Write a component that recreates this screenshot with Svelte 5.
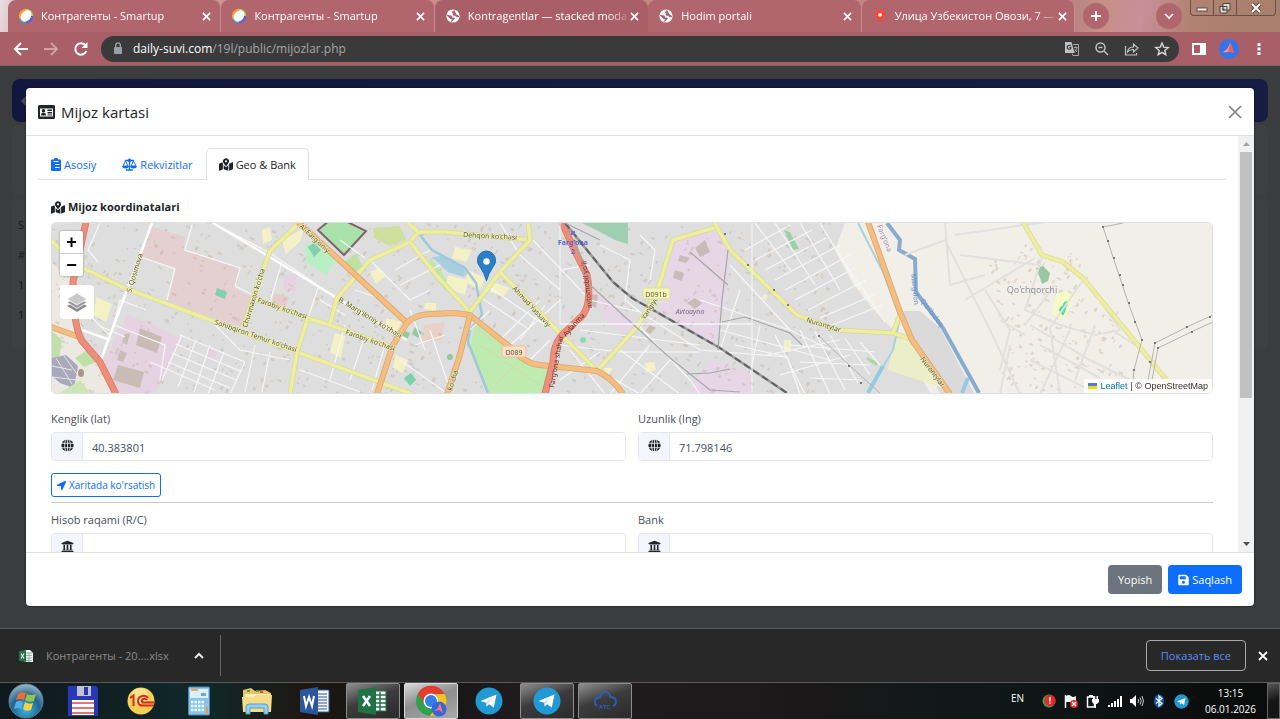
<script lang="ts">
  type Tab = { title: string; icon: "smartup" | "globe" | "pin"; active?: boolean };

  const browserTabs: Tab[] = [
    { title: "Контрагенты - Smartup", icon: "smartup" },
    { title: "Контрагенты - Smartup", icon: "smartup" },
    { title: "Kontragentlar — stacked moda", icon: "globe", active: true },
    { title: "Hodim portali", icon: "globe" },
    { title: "Улица Узбекистон Овози, 7 —", icon: "pin" },
  ];

  const cardTabs = [
    { id: "asosiy", label: "Asosiy" },
    { id: "rekvizit", label: "Rekvizitlar" },
    { id: "geo", label: "Geo & Bank" },
  ];

  const apps = [
    { id: "start", label: "Start", state: "" },
    { id: "commander", label: "Total Commander", state: "" },
    { id: "onec", label: "1C", state: "" },
    { id: "calc", label: "Calculator", state: "" },
    { id: "explorer", label: "Explorer", state: "" },
    { id: "word", label: "Word", state: "" },
    { id: "excel", label: "Excel", state: "open" },
    { id: "chrome", label: "Chrome", state: "focus" },
    { id: "telegram", label: "Telegram", state: "" },
    { id: "telegram", label: "Telegram", state: "open" },
    { id: "atc", label: "ATC", state: "open" },
  ];

  let activeTab = $state("geo");
  let lat = $state("40.383801");
  let lng = $state("71.798146");
  let account = $state("");
  let bank = $state("");

  // small deterministic generator for the building footprints
  function scatter(seed: number, count: number, x: number, y: number, w: number, h: number) {
    let s = seed;
    const next = () => (s = (s * 16807) % 2147483647) / 2147483647;
    return Array.from({ length: count }, () => ({
      x: x + next() * w,
      y: y + next() * h,
      w: 1 + next() * 4,
      h: 1 + next() * 2,
      r: next() > 0.5 ? 25 : -55,
    }));
  }

  const buildings = [
    ...scatter(1100011, 420, 51, 223, 380, 170),
    ...scatter(2900029, 380, 430, 223, 400, 170),
    ...scatter(7300073, 110, 1000, 310, 120, 80),
    ...scatter(9100091, 60, 990, 245, 100, 70),
  ];

  const yellowRoads = [
    "M51 240L65 255L83 268L127 289L213 321L297 352L412 394",
    "M298 224L270 251L253 298L243 327",
    "M253 298L307 318L330 325L392 347",
    "M308 318L297 352L290 394",
    "M330 324L337 298L370 260L410 242L418 232L445 232L530 240",
    "M407 222L418 232M410 242L438 277L470 312",
    "M528 222L530 240L500 272L470 312",
    "M500 272L597 371L637 327L657 292L673 240L717 227",
    "M714 222L730 250L797 315L837 330L893 333L911 339L893 333L901 312",
    "M1023 222L1042 255L1063 262L1083 278L1178 394",
  ];

  const orangeRoads = [
    "M298 222L348 268L407 323",
    "M377 394L393 345L407 323Q414 315 430 314L455 313L470 315L510 347Q525 364 540 365L597 371Q612 378 623 394",
    "M470 315L459 358L447 394",
    "M51 327L82 338",
    "M868 222L900 312L912 340L950 394",
  ];

  const redRoads = [
    "M86 222L73 282Q73 325 82 341L100 362L116 394",
    "M562 222L572 245L587 275Q592 302 583 315L562 335Q553 345 553 362L545 394",
  ];

  const streets = [
    "M152 223L127 290L100 362M60 285L110 336L127 290M100 326L125 337",
    "M213 223L270 253L337 298L407 340M282 262L270 302M318 288L308 318M320 300L345 315",
    "M100 223L88 250L98 262M192 225L185 250L240 268L235 286L255 296",
    "M141 257L175 269L167 300M146 310L120 300L114 325L165 345L160 380M150 362L215 390",
    "M180 335L245 362M176 344L240 371M172 353L236 380M168 362L230 388M182 335L162 380M196 340L178 387M210 345L194 392M224 352L208 394M245 362L230 394",
    "M215 325L240 350L290 360M255 345L245 392M270 352L262 392M345 325L330 380M365 336L350 380M385 345L372 390M300 370L360 392",
    "M340 240L365 258M355 290L385 300M370 260L410 300L430 290M400 285L440 265M395 270L430 250M430 330L450 390M415 345L445 335",
    "M400 360L445 392M410 310L425 350",
    "M500 223L520 255L560 290M533 240L590 300L640 312L700 350L787 357M560 270L590 265M600 245L630 260L625 300L640 312M640 235L655 250L650 280",
    "M480 297L530 330M490 288L545 325M470 330L490 310M520 340L545 305M505 350L560 300M530 360L550 340M540 300L500 340",
    "M580 330L700 345M560 345L620 352L700 352M640 327L690 380L700 394M570 350L605 394M650 345L610 394M670 360L640 394M600 371L640 394M620 350L680 394M560 380L600 352",
    "M700 300L790 330L830 350M735 345L787 357L800 394M720 330L830 360M740 290L720 350M760 325L750 375M730 265L790 330",
    "M745 250L790 225M755 260L812 230M765 270L826 238M775 280L840 245M785 290L850 255M795 300L855 268M808 310L866 280M820 318L874 295M830 326L882 305",
    "M755 223L792 272M775 223L815 285M800 223L840 290M820 223L860 290M830 240L885 322",
    "M800 330L830 394M815 332L845 390M830 335L858 383M845 338L870 375M860 342L880 365M790 345L875 352M800 362L870 365M810 378L862 380",
    "M775 335L805 394M767 355L840 340M780 375L850 355",
  ];

  const villageStreets = [
    "M905 255L945 240L990 330L1020 394M945 223L950 285L985 275M960 255L1040 265M955 235L1045 222",
    "M965 300L1035 258M1042 258L1025 310L1060 325L1095 335L1120 330M1055 285L1025 325M1083 280L1050 328",
    "M1050 328L1060 394M1030 325L1090 360L1130 380M1040 345L1100 378M1030 360L1090 390M1070 330L1040 394M1095 325L1075 380M1112 330L1135 345",
    "M1010 345L1000 394M1000 320L1025 335M985 290L1010 330L1000 370M1100 300L1120 330",
  ];
</script>

{#snippet closeMark(size: number)}
  <svg width={size} height={size} viewBox="0 0 10 10" aria-hidden="true"><path d="M1 1L9 9M9 1L1 9" fill="none" stroke="currentColor" stroke-width="1.8" /></svg>
{/snippet}

{#snippet mapIcon()}
  <svg width="14" height="13" viewBox="0 0 576 512" aria-hidden="true"><path fill="currentColor" d="M288 0c-69.59 0-126 56.41-126 126 0 56.26 82.35 158.8 113.9 196.02 6.39 7.54 17.82 7.54 24.2 0C331.65 284.8 414 182.26 414 126 414 56.41 357.59 0 288 0zm0 168c-23.2 0-42-18.8-42-42s18.8-42 42-42 42 18.8 42 42-18.8 42-42 42zM20.12 215.95A32.006 32.006 0 0 0 0 245.66v250.32c0 11.32 11.43 19.06 21.94 14.86L160 448V214.92c-8.84-15.98-16.07-31.54-21.25-46.42L20.12 215.95zM288 359.67c-14.07 0-27.38-6.18-36.51-16.96-19.66-23.2-40.57-49.62-59.49-76.72v182l192 64V266c-18.92 27.09-39.82 53.52-59.49 76.72-9.13 10.77-22.44 16.95-36.51 16.95zm266.06-198.51L416 224v288l139.88-55.95A31.996 31.996 0 0 0 576 426.34V176.02c0-11.32-11.43-19.06-21.94-14.86z" /></svg>
{/snippet}

{#snippet globeIcon()}
  <svg width="13" height="13" viewBox="0 0 16 16" aria-hidden="true">
    <circle cx="8" cy="8" r="7.5" fill="#212529" />
    <path d="M0 5.3H16M0 10.7H16M8 0V16" stroke="#f3f6ff" stroke-width="1" />
    <ellipse cx="8" cy="8" rx="3.6" ry="8" fill="none" stroke="#f3f6ff" stroke-width="1" />
  </svg>
{/snippet}

{#snippet bankIcon()}
  <svg width="13" height="13" viewBox="0 0 512 512" aria-hidden="true"><path fill="#212529" d="M496 128v16a8 8 0 0 1-8 8h-24v12c0 6.627-5.373 12-12 12H60c-6.627 0-12-5.373-12-12v-12H24a8 8 0 0 1-8-8v-16a8 8 0 0 1 4.941-7.392l232-88a7.996 7.996 0 0 1 6.118 0l232 88A8 8 0 0 1 496 128zm-24 304H40c-13.255 0-24 10.745-24 24v16a8 8 0 0 0 8 8h464a8 8 0 0 0 8-8v-16c0-13.255-10.745-24-24-24zM96 192v192H60c-6.627 0-12 5.373-12 12v20h416v-20c0-6.627-5.373-12-12-12h-36V192h-64v192h-64V192h-64v192h-64V192H96z" /></svg>
{/snippet}

{#snippet telegramIcon(size: number)}
  <svg width={size} height={size} viewBox="0 0 28 28" aria-hidden="true">
    <circle cx="14" cy="14" r="13.5" fill="#2199d4" />
    <path d="M5.5 14L21.5 7.6L18.8 20.6L14 17.2L11.6 19.6L11 15.7Z" fill="#fff" />
    <path d="M11 15.7L18.5 10L12.7 16.3L11.6 19.6Z" fill="#b9d6e8" />
  </svg>
{/snippet}

<div class="screen">
  <header class="tabstrip">
    <div class="tabs">
      {#each browserTabs as tab}
        <div class="tab" class:active={tab.active}>
          <svg width="16" height="16" viewBox="0 0 16 16" aria-hidden="true">
            {#if tab.icon === "smartup"}
              <path d="M8 8L1.500 11A7.300 7.300 0 0 1 8 .7Z" fill="#ff9b2e" />
              <path d="M8 8V.7A7.300 7.300 0 0 1 15.300 8Z" fill="#a5cf62" />
              <path d="M8 8H15.300A7.300 7.300 0 0 1 8 15.300Z" fill="#5a63c9" />
              <path d="M8 8V15.300A7.300 7.300 0 0 1 1.500 11Z" fill="#35a8df" />
              <ellipse cx="8" cy="8" rx="6.2" ry="4.8" transform="rotate(-48 8 8)" fill="#fff" />
            {:else if tab.icon === "globe"}
              <circle cx="8" cy="8" r="6.6" fill="#fff" />
              <path d="M2 7.300L6.500 8L7 10L9.500 10L8.500 11.800L6 13.500L8 11.500L5.500 10.500ZM9 2.500L7 4.500L8.500 5.500L8 7L10.500 7.500L11.500 9L14 8.500L11 6.500L10 4.500Z" fill="#a75d66" stroke="#a75d66" stroke-width=".8" />
            {:else}
              <path d="M8 14.5L6.6 11.5A5 5 0 1 1 9.4 11.5Z" fill="#ff4433" />
              <circle cx="8" cy="6.8" r="1.9" fill="#fff" />
            {/if}
          </svg>
          <span class="tab-title">{tab.title}</span>
          <button type="button" aria-label="Close tab">{@render closeMark(9)}</button>
        </div>
      {/each}
    </div>
    <button type="button" class="round" aria-label="New tab">
      <svg width="12" height="12" viewBox="0 0 12 12"><path d="M6 1V11M1 6H11" stroke="#fff" stroke-width="1.8" /></svg>
    </button>
    <button type="button" class="round tab-search" aria-label="Search tabs">
      <svg width="10" height="8" viewBox="0 0 10 8"><path d="M1 2L5 6L9 2" fill="none" stroke="#fff" stroke-width="1.7" /></svg>
    </button>
    <div class="window-buttons">
      <button type="button" aria-label="Minimize"><svg width="14" height="12" viewBox="0 0 14 12"><rect x="2" y="6" width="10" height="3" fill="#fff" stroke="#5c4a48" /></svg></button>
      <button type="button" aria-label="Restore"><svg width="14" height="12" viewBox="0 0 14 12"><path d="M5 1.5H12V8H5ZM2 4.500H9V11H2Z" fill="#ddd" stroke="#4d3f3d" /><rect x="4.500" y="6.500" width="2" height="2" fill="#4d3f3d" /></svg></button>
      <button type="button" class="wide" aria-label="Close"><svg width="14" height="12" viewBox="0 0 14 12"><path d="M3 2L11 10M11 2L3 10" stroke="#5c4a48" stroke-width="4" /><path d="M3 2L11 10M11 2L3 10" stroke="#fff" stroke-width="2" /></svg></button>
    </div>
  </header>

  <nav class="toolbar" aria-label="Browser">
    <button type="button" aria-label="Back"><svg width="16" height="16" viewBox="0 0 16 16"><path d="M15 8H2.500M8 2L2 8L8 14" fill="none" stroke="#fff" stroke-width="2" /></svg></button>
    <button type="button" aria-label="Forward"><svg width="16" height="16" viewBox="0 0 16 16"><path d="M1 8H13.500M8 2L14 8L8 14" fill="none" stroke="#d3a1a6" stroke-width="1.8" /></svg></button>
    <button type="button" aria-label="Reload"><svg width="16" height="16" viewBox="0 0 16 16"><path d="M13.300 10A5.700 5.700 0 1 1 12.300 4.200" fill="none" stroke="#fff" stroke-width="2" /><path d="M14.500 1V7H8.500Z" fill="#fff" /></svg></button>
    <div class="address">
      <svg width="10" height="13" viewBox="0 0 10 13" aria-hidden="true"><rect x="1" y="5" width="8" height="7" rx="1" fill="#9aa0a6" /><path d="M2.700 5V3.200A2.300 2.300 0 0 1 7.300 3.200V5" fill="none" stroke="#9aa0a6" stroke-width="1.400" /></svg>
      <span class="url"><b>daily-suvi.com</b>/19l/public/mijozlar.php</span>
      <button type="button" aria-label="Translate"><svg width="16" height="16" viewBox="0 0 16 16"><path d="M1 1H7.500L10.500 12H1Z" fill="#bfc1c4" /><path d="M6.800 5A2 2 0 1 0 6.800 7.500V6.500H5.300" fill="none" stroke="#3a3a3a" stroke-width="1.200" /><path d="M9 3.500H14.500V14.500H9L8 12.500M10 6.500H13.500M11.700 5.500V6.500M13 7Q12 10 10 11M11 8.500L13 11" fill="none" stroke="#a5a7aa" /></svg></button>
      <button type="button" aria-label="Zoom"><svg width="16" height="16" viewBox="0 0 16 16"><circle cx="6.500" cy="6.500" r="4.500" fill="none" stroke="#bfc1c4" stroke-width="1.500" /><path d="M10 10L14 14M4.500 6.500H8.500" stroke="#bfc1c4" stroke-width="1.500" /></svg></button>
      <button type="button" aria-label="Share"><svg width="16" height="16" viewBox="0 0 16 16"><path d="M1.500 5V14H12.500V12M3.500 11Q4 6 9.500 6V3L14 7L9.500 11V8.500Q5.500 8.300 3.500 11Z" fill="none" stroke="#bfc1c4" stroke-width="1.200" /></svg></button>
      <button type="button" aria-label="Bookmark"><svg width="16" height="16" viewBox="0 0 16 16"><path d="M8 2L9.700 6.100L14.200 6.500L10.800 9.400L11.800 13.700L8 11.400L4.200 13.700L5.200 9.400L1.800 6.500L6.300 6.100Z" fill="none" stroke="#d5d6d8" stroke-width="1.400" /></svg></button>
    </div>
    <button type="button" aria-label="Side panel"><svg width="14" height="14" viewBox="0 0 14 14"><path fill-rule="evenodd" fill="#fff" d="M0 1H14V13H0ZM2 3V11H8V3Z" /></svg></button>
    <button type="button" aria-label="Profile"><svg width="20" height="20" viewBox="0 0 20 20"><circle cx="10" cy="10" r="10" fill="#3274ee" /><path d="M11.500 3L10 13L3.500 13.500L8.500 9.500Z" fill="#ff8a7d" /><path d="M11.500 3L15.500 14.500L9.500 12.500Z" fill="#e9615f" /></svg></button>
    <button type="button" aria-label="Menu"><svg width="4" height="14" viewBox="0 0 4 14"><path d="M.5 1H3.500V4H.5ZM.5 5.500H3.500V8.500H.5ZM.5 10H3.500V13H.5Z" fill="#fff" /></svg></button>
  </nav>

  <main class="page">
    <div class="behind" aria-hidden="true">
      <div class="navbar"><svg width="8" height="12" viewBox="0 0 8 12"><path d="M7 1L2 6L7 11" fill="none" stroke="#4c4c52" stroke-width="3" /></svg></div>
      <div class="ghost"></div>
      <div class="ghost list"><span>S</span><span>#</span><span>1</span><span>1</span></div>
    </div>

    <section class="modal" role="dialog" aria-labelledby="modal-title">
      <header class="modal-header">
        <svg width="17" height="14" viewBox="0 0 34 28" aria-hidden="true">
          <path fill="#212529" fill-rule="evenodd" d="M3 0H31Q34 0 34 3V25Q34 28 31 28H3Q0 28 0 25V3Q0 0 3 0ZM4 7V23H30V7ZM6 20Q6 16 9 16H13Q16 16 16 20V21H6ZM11 8A3.500 3.500 0 1 1 10.900 8ZM19 9H28V12H19ZM19 14H28V17H19ZM19 19H28V21H19Z" />
        </svg>
        <h1 id="modal-title">Mijoz kartasi</h1>
        <button type="button" aria-label="Yopish"><svg width="14" height="14" viewBox="0 0 14 14"><path d="M1 1L13 13M13 1L1 13" stroke="#808080" stroke-width="1.700" /></svg></button>
      </header>

      <div class="modal-scroll">
        <div class="modal-body">
          <div class="card-tabs" role="tablist">
            {#each cardTabs as tab}
              <button type="button" role="tab" class:active={activeTab === tab.id} aria-selected={activeTab === tab.id} onclick={() => (activeTab = tab.id)}>
                {#if tab.id === "asosiy"}
                  <svg width="10" height="13" viewBox="0 0 20 26" aria-hidden="true"><path fill="currentColor" fill-rule="evenodd" d="M2 3H6A4 4 0 0 1 14 3H18Q20 3 20 5V24Q20 26 18 26H2Q0 26 0 24V5Q0 3 2 3ZM5 6V8H15V6ZM8 12V14H17V12ZM8 18V20H17V18Z" /></svg>
                {:else if tab.id === "rekvizit"}
                  <svg width="15" height="13" viewBox="0 0 30 26" aria-hidden="true"><path d="M6 5H24M15 1V24M8 24H22" fill="none" stroke="currentColor" stroke-width="2.600" /><path d="M7 6L2 16H12ZM23 6L18 16H28Z" fill="none" stroke="currentColor" stroke-width="2" /><path d="M0 16H14Q13 21 7 21Q1 21 0 16ZM16 16H30Q29 21 23 21Q17 21 16 16Z" fill="currentColor" /><circle cx="15" cy="5" r="3.500" fill="currentColor" /></svg>
                {:else}
                  {@render mapIcon()}
                {/if}
                {tab.label}
              </button>
            {/each}
          </div>

          <div class="tab-content">
            <h2>{@render mapIcon()} Mijoz koordinatalari</h2>

            <div class="map">
              <svg class="tiles" viewBox="51 223 1162 170" preserveAspectRatio="xMidYMid slice" role="img" aria-label="Farg'ona">
                <rect x="51" y="223" width="1162" height="170" fill="#f2efe9" />
                <path d="M51 223H845L835 250L852 282L872 308L898 335L930 393H51Z" fill="#dedede" />
                <path d="M903 311L920 311L940 328L974 393H940L912 340Z" fill="#dadada" />
                <path d="M51 262L75 285L82 338L104 370L115 393H51Z" fill="#ece8e2" />
                <path d="M152 227L185 237L183 250L240 267L235 288L253 298L243 327L225 322L167 302L175 268L140 257Z" fill="#e4d0d0" />
                <path d="M128 315L165 330L180 338L155 393H115L103 362Z" fill="#e6d3e2" />
                <path d="M283 276L297 272L296 292L284 290ZM208 348L218 352L214 360L206 357Z" fill="#e6d3e2" />
                <path d="M274 293L289 297L286 308L272 303Z" fill="#e6cdcd" />
                <path d="M673 243L715 230L730 250L724 300L717 343L700 336L660 315Z" fill="#e6d6e6" />
                <path d="M592 290L602 295L640 327L625 334L605 320Z" fill="#e6d6e6" />
                <path d="M710 360L752 373V393H690L700 372Z" fill="#e6d6e6" />
                <path d="M424 325L445 322L442 340L422 342Z" fill="#e8d2c8" />
                <path d="M895 338L911 340L920 358L943 388L888 370Z" fill="#ebefc9" />
                <g fill="#bfa997" opacity=".38">
                  {#each buildings as b}
                    <rect x={b.x} y={b.y} width={b.w} height={b.h} transform="rotate({b.r} {b.x} {b.y})" />
                  {/each}
                </g>
                <!-- parks and pitches -->
                <path d="M475 324L485 325L510 347L530 362L552 368L543 393H490L480 375L470 348Z" fill="#bdebb0" />
                <path d="M476 328L505 348M480 345L540 385M490 390L520 360" stroke="#d9d7b0" stroke-width="1" />
                <path d="M318 230L335 216L366 231L344 255Z" fill="#a9e3ab" stroke="#82656c" stroke-width="2" />
                <path d="M305 246L315 240L338 258L326 275L306 262Z" fill="#b9efc5" />
                <path d="M308 247L314 243L321 250L314 257ZM217 288L227 292L225 299L215 295Z" fill="#84cfae" />
                <path d="M373 228L400 226L406 240L390 246L374 238Z" fill="#cfdf9e" />
                <path d="M345 262L356 253L362 266L352 274Z" fill="#bee0a2" />
                <path d="M582 223H628V244L615 240L600 232Z" fill="#9fcfb0" />
                <path d="M784 230L790 232L799 249L793 250Z" fill="#9bcfa9" />
                <path d="M430 257L440 270L450 285L445 290L430 272Z" fill="#bfe5b0" />
                <path d="M404 378L411 373L416 380L410 386Z" fill="#75d4ab" />
                <path d="M402 330L410 333L407 340L400 336ZM415 327L422 332L418 338L412 334Z" fill="#92c9a0" />
                <path d="M51 330L62 340L58 365L51 370ZM75 358L90 348L96 362L84 367Z" fill="#bfe0a8" />
                <path d="M52 358L66 355L78 366L74 388L60 383L52 376Z" fill="#a9a8bd" />
                <path d="M56 358L72 384M64 356L77 374M52 366L72 370M53 377L76 380" stroke="#e8e4e4" stroke-width="1" />
                <path d="M60 393L80 380L90 393Z" fill="#cde4b6" />
                <ellipse cx="81" cy="373" rx="3" ry="4" fill="#a5958d" />
                <path d="M1036 268L1043 266L1050 273L1048 281L1042 284L1040 278Z" fill="#98c7a1" />
                <path d="M1056 294L1067 291L1074 296L1064 319L1052 314Z" fill="#f6fbc5" />
                <path d="M1059 310L1062 306L1066 308L1063 315ZM1064 303L1067 301L1067 306L1063 307Z" fill="#47dfa5" stroke="#47dfa5" />
                <path d="M868 357L878 363L876 366L866 359Z" fill="#aed7a4" />
                <circle cx="583" cy="340" r="3" fill="#8ed8b8" />
                <circle cx="450" cy="357" r="3" fill="#92c9a0" />
                <!-- school plots -->
                <path d="M262 230L270 227L272 240L263 244ZM282 240L304 228L300 242L286 254ZM96 297L112 304L106 322L94 315ZM335 333L345 336L341 358L330 352ZM370 272L380 268L386 276L376 284ZM386 318L402 322L396 332L386 330ZM395 355L408 360L403 373L393 368ZM425 303L436 303L436 311L424 309ZM455 247L472 250L466 262L452 258ZM448 275L468 280L465 295L445 287ZM468 270L485 278L480 290L466 282ZM493 282L510 288L504 296L490 292ZM604 368L613 368L608 376ZM645 363L654 362L656 370L646 372ZM784 340L791 340V352L784 352ZM764 294L768 296L765 300L762 298Z" fill="#f5f1c6" />
                <!-- factories -->
                <path d="M140 328L162 337L157 353L136 345ZM118 365L144 372L140 388L113 380ZM125 334L130 333L127 345L122 342ZM120 350L127 353L123 362L117 360ZM695 248L705 240L710 252L700 257ZM675 270L684 273L682 281L673 278ZM680 255L690 258L686 263L678 261ZM695 298L702 303L695 309L687 303ZM590 294L598 295L596 308L589 304ZM650 325L656 328L650 334L645 331Z" fill="#c9bcb6" />
                <!-- water -->
                <path d="M432 257L443 256L465 267L464 277L448 272Z" fill="#a5cfdc" />
                <path d="M420 235L432 250L465 268L476 283L482 315L470 330L468 342L488 393" fill="none" stroke="#9fc8dd" stroke-width="2.500" />
                <path d="M858 223L883 272L900 318L893 350L883 367" fill="none" stroke="#a9d2dc" stroke-width="2" />
                <path d="M883 366L868 393M968 378L962 393" stroke="#93cbe2" stroke-width="4" />
                <path d="M887 223L900 240L899 250L915 259L916 292L943 328L979 393" fill="none" stroke="#88acd0" stroke-width="4" />
                <!-- streets -->
                {#each streets as d}
                  <path {d} fill="none" stroke="#f7f7f7" stroke-width="1.200" />
                {/each}
                {#each villageStreets as d}
                  <path {d} fill="none" stroke="#e2e0dd" stroke-width="2" />
                {/each}
                <path d="M152 223L127 290L100 362M213 223L283 265L337 298L407 340M60 290L82 330L110 340" fill="none" stroke="#fff" stroke-width="2.500" />
                {#each yellowRoads as d}
                  <path {d} fill="none" stroke="#d5d79d" stroke-width="5" />
                  <path {d} fill="none" stroke="#edef9e" stroke-width="3.600" />
                {/each}
                {#each orangeRoads as d}
                  <path {d} fill="none" stroke="#d9a86c" stroke-width="6" />
                  <path {d} fill="none" stroke="#f5bd7f" stroke-width="4.400" />
                {/each}
                {#each redRoads as d}
                  <path {d} fill="none" stroke="#dd7867" stroke-width="7" />
                  <path {d} fill="none" stroke="#ec8e7c" stroke-width="5.400" />
                {/each}
                <!-- railways -->
                <path d="M565 223L613 282L632 298L720 348L787 393" fill="none" stroke="#999" stroke-width="2.500" />
                <path d="M565 223L613 282L632 298L720 348L787 393" fill="none" stroke="#5f6266" stroke-width="2" stroke-dasharray="7 4" />
                <path d="M575 240L590 285L670 358L710 390L740 392M728 250L722 300L718 350M722 322L745 317L790 333L802 345M687 374L710 373L730 369M690 252L728 285M565 223L600 240" fill="none" stroke="#a5a7aa" stroke-width="1.200" />
                <path d="M560 223V324H752V223M560 324H752V393" fill="none" stroke="#f5f5f5" stroke-width="1" />
                <!-- power lines -->
                <g fill="none" stroke="#b5b3af" stroke-width="1">
                  <path d="M1123 223L1103 227L1114 260L1128 302L1142 340L1134 370L1133 380" />
                  <path d="M1213 315L1187 327L1155 343L1148 380M1213 322L1191 332L1158 348L1152 380" />
                  <path d="M818 335L850 366L880 393" />
                </g>
                <path d="M1102 226h2v2h-2zM1107 240h2v2h-2zM1113 257h2v2h-2zM1119 274h2v2h-2zM1122 284h2v2h-2zM1128 302h2v2h-2zM1134 321h2v2h-2zM1141 339h2v2h-2zM1133 369h2v2h-2zM1149 361h2v2h-2zM1154 342h2v2h-2zM1157 347h2v2h-2zM1186 326h2v2h-2zM1191 331h2v2h-2zM1209 316h2v2h-2zM724 233h2v2h-2zM747 264h2v2h-2zM773 289h2v2h-2zM787 304h2v2h-2zM818 335h2v2h-2zM848 365h2v2h-2zM860 382h2v2h-2z" fill="#77787a" />
                <!-- labels -->
                <g class="road-label">
                  <text transform="translate(214 324) rotate(19)">Sohibqiron Temur ko'chasi</text>
                  <text transform="translate(257 302) rotate(19)">Farobiy ko'chasi</text>
                  <text transform="translate(345 334) rotate(19)">Farobiy ko'chasi</text>
                  <text transform="translate(247 328) rotate(-73)">Churmaxon ko'cha</text>
                  <text transform="translate(338 301) rotate(31)">B. Marg'iloniy ko'chasi</text>
                  <text transform="translate(131 293) rotate(-73)">S. Qosimova</text>
                  <text transform="translate(463 237) rotate(3)">Dehqon ko'chasi</text>
                  <text transform="translate(512 289) rotate(47)">Ahmad Yassaviy</text>
                  <text transform="translate(645 320) rotate(-58)">Yangiyo'l</text>
                  <text transform="translate(806 322) rotate(17)">Nurontylar</text>
                  <text transform="translate(920 359) rotate(53)">Nurontylar</text>
                  <text transform="translate(299 227) rotate(43)">Al-Farg'oniy</text>
                  <text transform="translate(452 391) rotate(-73)">ko'cha</text>
                </g>
                <g class="main-label">
                  <text transform="translate(554 388) rotate(-80)">Farg'ona shahar</text>
                  <text transform="translate(566 337) rotate(-48)">Aylanma</text>
                  <text transform="translate(592 308) rotate(-97)">avtomobil yo'li</text>
                </g>
                <g class="water-label">
                  <text transform="translate(911 274) rotate(84)">Marg'ilon</text>
                  <text transform="translate(920 301) rotate(52)">Qizilbuloq</text>
                </g>
                <text class="border-label" transform="translate(877 226) rotate(68)">Farg'ona</text>
                <rect x="643" y="288" width="27" height="11" rx="2" fill="#f5f5b7" stroke="#dcdf9c" />
                <text class="shield" x="656" y="297">D091b</text>
                <rect x="502" y="346" width="24" height="11" rx="2" fill="#f9dfc6" stroke="#ebc19c" />
                <text class="shield" x="514" y="355">D089</text>
                <text class="station" x="573" y="245">Farg'ona</text>
                <text class="station" x="573" y="254">2</text>
                <rect x="571" y="231" width="4" height="4" fill="#6973c9" />
                <text class="district" x="690" y="314">Avtoayno</text>
                <text class="village" x="1032" y="293">Qo'chqorchi</text>
                <!-- marker -->
                <path d="M486.500 281Q485 274 480 267Q477 263 477.500 260A9 9 0 0 1 495.500 260Q496 263 493 267Q488 274 486.500 281Z" fill="#2a7fc6" stroke="#256fae" />
                <circle cx="486.500" cy="261.500" r="3.200" fill="#fff" />
              </svg>
              <div class="map-controls">
                <div class="zoom">
                  <button type="button" aria-label="Zoom in">+</button>
                  <button type="button" aria-label="Zoom out">−</button>
                </div>
                <button type="button" class="layers" aria-label="Layers">
                  <svg width="22" height="22" viewBox="0 0 22 22"><path d="M1 15L11 21L21 15L11 9Z" fill="#8c8c8c" /><path d="M1 11.500L11 17.500L21 11.500L11 6Z" fill="#9c9c9c" stroke="#fff" stroke-width=".8" /><path d="M1 8L11 14L21 8L11 2Z" fill="#c9c9c9" stroke="#fff" stroke-width=".8" /></svg>
                </button>
              </div>
              <div class="attribution">
                <svg width="9" height="6" viewBox="0 0 9 6" aria-hidden="true"><path d="M0 0H9V3H0Z" fill="#4c7be1" /><path d="M0 3H9V6H0Z" fill="#ffd500" /></svg>
                <a href="#leaflet">Leaflet</a> | © OpenStreetMap
              </div>
            </div>

            <div class="fields">
              <div class="field">
                <label for="lat">Kenglik (lat)</label>
                <div class="input-group"><span class="addon">{@render globeIcon()}</span><input id="lat" type="text" bind:value={lat} /></div>
              </div>
              <div class="field">
                <label for="lng">Uzunlik (lng)</label>
                <div class="input-group"><span class="addon">{@render globeIcon()}</span><input id="lng" type="text" bind:value={lng} /></div>
              </div>
            </div>

            <button type="button" class="btn-outline">
              <svg width="9" height="9" viewBox="0 0 512 512" aria-hidden="true"><path fill="currentColor" d="M444.52 3.52L28.74 195.42c-47.97 22.39-31.98 92.75 19.19 92.75h175.91v175.91c0 51.17 70.36 67.17 92.75 19.19l191.9-415.78c15.99-38.39-25.59-79.97-63.97-63.97z" /></svg>
              Xaritada ko'rsatish
            </button>

            <hr />

            <div class="fields">
              <div class="field">
                <label for="account">Hisob raqami (R/C)</label>
                <div class="input-group"><span class="addon">{@render bankIcon()}</span><input id="account" type="text" bind:value={account} /></div>
              </div>
              <div class="field">
                <label for="bank">Bank</label>
                <div class="input-group"><span class="addon">{@render bankIcon()}</span><input id="bank" type="text" bind:value={bank} /></div>
              </div>
            </div>
          </div>
        </div>
        <div class="scrollbar" aria-hidden="true">
          <svg width="7" height="4" viewBox="0 0 7 4"><path d="M0 4L3.500 0L7 4Z" fill="#a3a3a3" /></svg>
          <div class="track"><div class="thumb"></div></div>
          <svg width="7" height="4" viewBox="0 0 7 4"><path d="M0 0L3.500 4L7 0Z" fill="#505050" /></svg>
        </div>
      </div>

      <footer class="modal-footer">
        <button type="button" class="btn secondary">Yopish</button>
        <button type="button" class="btn primary">
          <svg width="11" height="12" viewBox="0 0 448 512" aria-hidden="true"><path fill="currentColor" d="M433.941 129.941l-83.882-83.882A48 48 0 0 0 316.118 32H48C21.49 32 0 53.49 0 80v352c0 26.51 21.49 48 48 48h352c26.51 0 48-21.49 48-48V163.882a48 48 0 0 0-14.059-33.941zM224 416c-35.346 0-64-28.654-64-64 0-35.346 28.654-64 64-64s64 28.654 64 64c0 35.346-28.654 64-64 64zm96-304.52V212c0 6.627-5.373 12-12 12H76c-6.627 0-12-5.373-12-12V108c0-6.627 5.373-12 12-12h228.52c3.183 0 6.235 1.264 8.485 3.515l3.48 3.48A11.996 11.996 0 0 1 320 111.48z" /></svg>
          Saqlash
        </button>
      </footer>
    </section>
  </main>

  <section class="downloads" aria-label="Downloads">
    <button type="button" class="download">
      <svg width="16" height="16" viewBox="0 0 16 16" aria-hidden="true"><path d="M6 2H12L15 5V14H6Z" fill="#f2f5f2" /><path d="M8 5H14M8 7.500H14M8 10H14M8 12.500H14M11 4V14" stroke="#7fa78d" stroke-width=".8" /><path d="M1 3L8 2V14L1 13Z" fill="#1f7244" /><path d="M3 5.500L6 10.500M6 5.500L3 10.500" stroke="#fff" stroke-width="1.200" /></svg>
      <span>Контрагенты - 20....xlsx</span>
    </button>
    <button type="button" class="caret" aria-label="Options"><svg width="10" height="7" viewBox="0 0 10 7"><path d="M1 6L5 2L9 6" fill="none" stroke="#e8e8e8" stroke-width="2" /></svg></button>
    <button type="button" class="show-all">Показать все</button>
    <button type="button" class="shelf-close" aria-label="Close">{@render closeMark(10)}</button>
  </section>

  <footer class="taskbar">
    {#each apps as app}
      <button type="button" class="app {app.state}" aria-label={app.label}>
        {#if app.id === "start"}
          <svg width="36" height="36" viewBox="0 0 36 36">
            <defs><radialGradient id="orb" cx=".5" cy=".75" r=".75"><stop offset="0" stop-color="#36b9e8" /><stop offset=".55" stop-color="#23638f" /><stop offset="1" stop-color="#9cbccb" /></radialGradient></defs>
            <circle cx="18" cy="18" r="17" fill="url(#orb)" stroke="#5d7f92" />
            <path d="M10 11Q14 8 18 10L16 17Q12 15 8 17Z" fill="#ef6b31" /><path d="M19 11Q23 13 28 11L26 18Q21 20 17 17Z" fill="#93c647" /><path d="M8 19Q12 17 15 19L13 26Q10 24 6 26Z" fill="#58aee9" /><path d="M17 19Q21 22 25 20L23 27Q18 29 15 26Z" fill="#fccf45" />
          </svg>
        {:else if app.id === "commander"}
          <svg width="30" height="30" viewBox="0 0 30 30"><path d="M0 0H28L30 2V30H0Z" fill="#2838b8" /><path d="M9 0H23V10H9Z" fill="#bfc3cf" /><path d="M16 1H20V9H16Z" fill="#2838b8" /><path d="M4 14H26V29H4Z" fill="#fff" /><path d="M4 17H26M4 22H26M4 27H26" stroke="#d6474b" stroke-width="1.500" /></svg>
        {:else if app.id === "onec"}
          <svg width="28" height="28" viewBox="0 0 28 28"><circle cx="14" cy="14" r="13.500" fill="#f6cd55" /><circle cx="13" cy="9" r="8" fill="#fce48b" /><path d="M3 11L6.500 8.500V19M21 11Q19 8 15.500 9Q11 10 11 14Q11 18.500 16 18.500H27M20 13Q18.500 11 16 12Q14 13.500 15.500 15.500H27" fill="none" stroke="#d42a22" stroke-width="2" /></svg>
        {:else if app.id === "calc"}
          <svg width="22" height="30" viewBox="0 0 22 30"><rect x=".5" y="1" width="21" height="28" rx="1" fill="#8cc3e6" stroke="#4e87b2" /><path d="M2 3H20V12H2Z" fill="#d9effa" /><path d="M3 3H10V5H3Z" fill="#f3a74c" /><path d="M13 7H18V10H13Z" fill="#7ba5c1" /><path d="M3 16H17M3 20H17M3 24H17" stroke="#e6f6ff" stroke-width="2.500" stroke-dasharray="2.500 1" /><path d="M18 21H20V27H18Z" fill="#f3953b" /></svg>
        {:else if app.id === "explorer"}
          <svg width="32" height="28" viewBox="0 0 32 28"><path d="M2 3L10 1L14 4L24 3L30 6V24H2Z" fill="#e8c465" /><path d="M4 7H29V12H4Z" fill="#fff0b6" /><path d="M1 10H13L15 8H31L30 25H2Z" fill="#f5dc8a" /><path d="M6 3H9V5H6ZM15 3H18V5H15Z" fill="#4c9b54" /><path d="M19 4H22V6H19Z" fill="#db4a3c" /><path d="M5 27V20Q5 17 8 17H24Q27 17 27 20V27H23V21H9V27Z" fill="#8fd2ef" stroke="#569fc4" /></svg>
        {:else if app.id === "word"}
          <svg width="30" height="28" viewBox="0 0 30 28"><path d="M16 3H29V25H16Z" fill="#f7f9fd" stroke="#2b579a" /><path d="M18 7H27M18 10H27M18 13H27M18 16H27M18 19H27M18 22H27" stroke="#2b579a" stroke-width="1.200" /><path d="M0 3L18 0V28L0 25Z" fill="#2b579a" /><path d="M4 9L6 19L9 10L12 19L14 9" fill="none" stroke="#fff" stroke-width="2" /></svg>
        {:else if app.id === "excel"}
          <svg width="30" height="28" viewBox="0 0 30 28"><path d="M16 4H28V24H16Z" fill="#fff" stroke="#207245" /><path d="M17 8H28M17 12H28M17 16H28M17 20H28M22 5V24" stroke="#207245" stroke-width="1.500" /><path d="M0 3L18 0V28L0 25Z" fill="#207245" /><path d="M5 9L12 19M12 9L5 19" stroke="#fff" stroke-width="2.500" /></svg>
        {:else if app.id === "chrome"}
          <svg width="32" height="32" viewBox="0 0 32 32"><circle cx="16" cy="16" r="15" fill="#30a04d" /><path d="M3 8.500A15 15 0 0 1 29.500 9H16A7 7 0 0 0 9.500 19Z" fill="#e53b2e" /><path d="M29.500 9A15 15 0 0 1 15 31L22 19A7 7 0 0 0 20 9Z" fill="#fbc31a" /><circle cx="16" cy="16" r="7.500" fill="#fff" /><circle cx="16" cy="16" r="6" fill="#357de9" /><circle cx="24" cy="24" r="7.500" fill="#3665dc" /><path d="M25 18L28 28L24 25L19 26L23 23Z" fill="#fb796c" /></svg>
        {:else if app.id === "telegram"}
          {@render telegramIcon(28)}
        {:else}
          <svg width="24" height="20" viewBox="0 0 24 20"><path d="M4 15Q0 12 3 8Q4 6 7 6Q8 1 13 1Q17 2 17 6Q23 6 23 11Q23 14 20 15" fill="none" stroke="#2860bd" stroke-width="1.800" /><text x="12" y="18" class="atc">ATC</text></svg>
        {/if}
      </button>
    {/each}

    <div class="tray">
      <span class="lang">EN</span>
      <svg width="14" height="14" viewBox="0 0 14 14" aria-hidden="true"><circle cx="7" cy="7" r="6.500" fill="#3f9f50" /><circle cx="8" cy="6.500" r="5.500" fill="#ee2424" /><path d="M8 3V7.500M8 8.500V10" stroke="#fff" stroke-width="1.600" /></svg>
      <svg width="14" height="14" viewBox="0 0 14 14" aria-hidden="true"><path d="M1.500 1V14" stroke="#fff" stroke-width="1.500" /><path d="M2 2Q5 0 7 2T12 2V8H2Z" fill="#f2f2f2" /><circle cx="10" cy="10" r="4" fill="#e12c2c" /><path d="M8 8L12 12M12 8L8 12" stroke="#fff" stroke-width="1.300" /></svg>
      <svg width="14" height="14" viewBox="0 0 14 14" aria-hidden="true"><rect x="1.500" y="3" width="7" height="10" fill="none" stroke="#fff" stroke-width="1.500" /><path d="M3 1H7V3H3Z" fill="#fff" /><path d="M6 5H13V8L11 10H8L6 8ZM7 2H8.500V5H7ZM10.500 2H12V5H10.500ZM9 10H10V14H9Z" fill="#fff" /></svg>
      <svg width="14" height="14" viewBox="0 0 14 14" aria-hidden="true"><path d="M0 11H2V13H0ZM3 9H5V13H3ZM6 7H8V13H6ZM9 5H11V13H9ZM12 2H14V13H12Z" fill="#fff" /></svg>
      <svg width="14" height="14" viewBox="0 0 14 14" aria-hidden="true"><path d="M0 5H2L6 1V13L2 9H0Z" fill="#fff" /><path d="M8 5Q9.500 7 8 9M10 3.500Q12.500 7 10 10.500M12 2Q15 7 12 12" fill="none" stroke="#c9c9c9" /></svg>
      <svg width="14" height="14" viewBox="0 0 14 14" aria-hidden="true"><ellipse cx="7" cy="7" rx="5" ry="6.800" fill="#1359a8" /><path d="M4 4.500L10 9.500L7 12V2L10 4.500L4 9.500" fill="none" stroke="#fff" stroke-width="1.200" /></svg>
      {@render telegramIcon(15)}
      <time><span>13:15</span><span>06.01.2026</span></time>
    </div>
    <button type="button" class="show-desktop" aria-label="Show desktop"></button>
  </footer>
</div>

<style>
  :global(body) {
    background: #282828;
  }

  .screen {
    display: flex;
    flex-direction: column;
    height: 100vh;
    overflow: hidden;
    color: #212529;
    font-family: "Open Sans", "Noto Sans", sans-serif;
    font-size: 11px;
    line-height: 16px;
  }

  .screen * {
    box-sizing: border-box;
  }

  button {
    align-items: center;
    background: none;
    border: 0;
    color: inherit;
    display: inline-flex;
    font: inherit;
    justify-content: center;
    padding: 0;
  }

  svg {
    display: block;
    flex: none;
  }

  /* browser chrome */
  .tabstrip {
    align-items: center;
    background: linear-gradient(100deg, #eadfe3 0, #cf9a98 3%, #c08a7f 55%, #b98684 84%, #c78f88 86%, #c98f9a 89%, #b08270 93%, #a87f6c 100%);
    display: flex;
    height: 32px;
    padding-left: 8px;
  }

  .tabs {
    display: flex;
    flex: 0 1 1067px;
    height: 32px;
    min-width: 0;
  }

  .tab {
    align-items: center;
    background: #b1656c;
    border-radius: 8px 8px 0 0;
    border-right: 1px solid #c58d91;
    color: #fff;
    display: flex;
    flex: 1;
    gap: 7px;
    min-width: 0;
    padding: 0 9px 0 10px;
  }

  .tab.active {
    background: #a95f67;
    border-color: #a95f67;
  }

  .tab-title {
    flex: 1;
    margin-right: -4px;
    mask-image: linear-gradient(90deg, #000 88%, #0003 100%);
    white-space: nowrap;
  }

  .round {
    background: #b1656c;
    border-radius: 50%;
    height: 26px;
    margin-left: 8px;
    width: 26px;
  }

  .tab-search {
    margin-left: auto;
  }

  .window-buttons {
    align-self: flex-start;
    border: 1px solid #67504b;
    border-radius: 0 0 4px 4px;
    border-top: 0;
    display: flex;
    height: 16px;
    margin: 0 4px 0 8px;
  }

  .window-buttons button {
    border-right: 1px solid #67504b;
    width: 23px;
  }

  .window-buttons .wide {
    border-right: 0;
    width: 38px;
  }

  .toolbar {
    align-items: center;
    background: #a95f67;
    border-bottom: 1px solid #7c6769;
    display: flex;
    gap: 10px;
    height: 34px;
    padding: 0 11px;
  }

  .toolbar button {
    height: 20px;
    width: 20px;
  }

  .address {
    align-items: center;
    background: #3a3a3a;
    border-radius: 13px;
    display: flex;
    flex: 1;
    gap: 10px;
    height: 26px;
    padding: 0 7px 0 12px;
  }

  .url {
    color: #a6a6a6;
    flex: 1;
    font-size: 12px;
  }

  .url b {
    color: #fff;
    font-weight: 400;
  }

  /* page under the dialog */
  .page {
    background: #3b3c3e;
    display: flex;
    flex: 1;
    min-height: 0;
    padding: 22px 26px;
    position: relative;
  }

  .behind {
    display: flex;
    flex-direction: column;
    gap: 3px;
    inset: 13px 12px auto;
    position: absolute;
  }

  .navbar {
    align-items: center;
    background: linear-gradient(90deg, #121740, #171d42);
    border-radius: 8px;
    display: flex;
    height: 43px;
    padding-left: 9px;
  }

  .ghost {
    background: #3e3f41;
    border-radius: 6px;
    height: 70px;
  }

  .list {
    color: #17181a;
    display: flex;
    flex-direction: column;
    gap: 14px;
    height: 150px;
    padding: 19px 6px;
  }

  /* dialog */
  .modal {
    background: #fff;
    border-radius: 4px;
    box-shadow: 0 0 2px #111;
    display: flex;
    flex: 1;
    flex-direction: column;
    min-width: 0;
    overflow: hidden;
    position: relative;
  }

  .modal-header {
    align-items: center;
    border-bottom: 1px solid #dee2e6;
    display: flex;
    gap: 6px;
    height: 48px;
    padding: 0 12px;
  }

  h1 {
    flex: 1;
    font-size: 15px;
    font-weight: 400;
    line-height: 20px;
    margin: 0;
  }

  .modal-scroll {
    display: flex;
    flex: 1;
    min-height: 0;
  }

  .modal-body {
    flex: 1;
    min-width: 0;
    overflow: hidden;
    padding: 12px;
  }

  .card-tabs {
    border-bottom: 1px solid #dee2e6;
    display: flex;
    height: 32px;
  }

  .card-tabs button {
    border: 1px solid transparent;
    border-bottom: 0;
    border-radius: 5px 5px 0 0;
    color: #0d6efd;
    gap: 3px;
    height: 32px;
    padding: 0 12px;
  }

  .card-tabs .active {
    background: #fff;
    border-color: #dee2e6;
    color: #212529;
  }

  .tab-content {
    padding: 19px 13px;
  }

  h2 {
    align-items: center;
    display: flex;
    font-size: 11px;
    font-weight: 700;
    gap: 3px;
    line-height: 16px;
    margin: 0 0 7px;
  }

  .map {
    border: 1px solid #dee2e6;
    border-radius: 5px;
    height: 172px;
    overflow: hidden;
    position: relative;
  }

  .tiles {
    height: 100%;
    width: 100%;
  }

  .tiles text {
    font-family: "Noto Sans", sans-serif;
  }

  .road-label {
    fill: #55553a;
    font-size: 7px;
    paint-order: stroke;
    stroke: #f3f3c5;
    stroke-width: 1px;
  }

  .main-label {
    fill: #6b2d24;
    font-size: 7px;
  }

  .water-label {
    fill: #5f8ec0;
    font-size: 7px;
  }

  .border-label {
    fill: #a888b1;
    font-size: 7px;
  }

  .shield {
    fill: #5b5a3c;
    font-size: 7px;
    text-anchor: middle;
  }

  .station {
    fill: #5963c7;
    font-size: 7px;
    font-weight: 700;
    text-anchor: middle;
  }

  .district {
    fill: #80658a;
    font-size: 7px;
    font-style: italic;
    text-anchor: middle;
  }

  .village {
    fill: #94949c;
    font-size: 9px;
    text-anchor: middle;
  }

  .map-controls {
    display: grid;
    gap: 9px;
    left: 8px;
    position: absolute;
    top: 8px;
  }

  .zoom {
    background: #fff;
    border-radius: 2px;
    box-shadow: 0 0 2px #777;
    display: grid;
    width: 23px;
  }

  .zoom button {
    color: #000;
    font-family: "Liberation Sans", sans-serif;
    font-size: 18px;
    font-weight: 700;
    height: 22px;
    line-height: 20px;
  }

  .zoom button + button {
    border-top: 1px solid #ccc;
    height: 23px;
  }

  .layers {
    background: #fff;
    border-radius: 4px;
    height: 34px;
    width: 34px;
  }

  .attribution {
    align-items: center;
    background: #fffc;
    bottom: 0;
    color: #333;
    display: flex;
    font-family: "Liberation Sans", sans-serif;
    font-size: 9px;
    gap: 3px;
    line-height: 14px;
    padding: 0 4px;
    position: absolute;
    right: 0;
  }

  .attribution a {
    color: #0078a8;
    text-decoration: none;
  }

  .fields {
    display: grid;
    gap: 12px;
    grid-template-columns: 1fr 1fr;
  }

  .field {
    padding-top: 17px;
  }

  label {
    color: #495057;
    display: block;
    margin-bottom: 5px;
  }

  .input-group {
    border: 1px solid #e3e7eb;
    border-radius: 4px;
    display: flex;
    height: 29px;
    overflow: hidden;
  }

  .addon {
    background: #f3f6ff;
    border-right: 1px solid #e3e7eb;
    display: flex;
    justify-content: center;
    padding-top: 6px;
    width: 31px;
  }

  input {
    background: #fff;
    border: 0;
    color: #495057;
    flex: 1;
    font: inherit;
    min-width: 0;
    outline: none;
    padding: 2px 9px 0;
  }

  .btn-outline {
    border: 1px solid #0d6efd;
    border-radius: 3px;
    color: #0d6efd;
    font-size: 10px;
    gap: 3px;
    height: 24px;
    margin-top: 12px;
    padding: 0 5px;
  }

  hr {
    border: 0;
    border-top: 1px solid #c8cacc;
    margin: 5px 0 0;
  }

  hr + .fields .field {
    padding-top: 9px;
  }

  .scrollbar {
    align-items: center;
    background: #f1f1f1;
    display: flex;
    flex-direction: column;
    padding: 6px 2px;
    width: 16px;
  }

  .track {
    flex: 1;
    padding: 6px 0;
    width: 100%;
  }

  .thumb {
    background: #c1c1c1;
    height: 64%;
  }

  .modal-footer {
    border-top: 1px solid #dee2e6;
    display: flex;
    gap: 6px;
    justify-content: flex-end;
    padding: 12px;
  }

  .btn {
    border-radius: 4px;
    color: #fff;
    gap: 3px;
    height: 29px;
    padding: 0 10px;
  }

  .secondary {
    background: #6c757d;
  }

  .primary {
    background: #0d6efd;
  }

  /* download shelf */
  .downloads {
    align-items: center;
    background: #282828;
    border-bottom: 1px solid #5a5a5a;
    border-top: 1px solid #5a5a5a;
    display: flex;
    height: 55px;
    padding: 0 12px 0 18px;
  }

  .download {
    color: #8b8b8b;
    gap: 12px;
  }

  .caret {
    border-right: 1px solid #666;
    height: 41px;
    padding: 0 16px 0 25px;
  }

  .show-all {
    border: 1px solid #a9a9a9;
    border-radius: 4px;
    color: #5b8cf5;
    height: 31px;
    margin-left: auto;
    padding: 0 14px;
  }

  .shelf-close {
    color: #fff;
    margin-left: 12px;
  }

  /* taskbar */
  .taskbar {
    background: linear-gradient(90deg, #10191c, #10282a 16%, #1d1711 24%, #131313 32%, #211d20 42%, #1d1819 60%, #101818 76%, #0b0b0b);
    display: flex;
    height: 36px;
  }

  .app {
    border: 1px solid transparent;
    border-radius: 2px;
    height: 36px;
    margin-right: 4px;
    width: 54px;
  }

  .app:first-child {
    width: 52px;
  }

  .open {
    background: linear-gradient(160deg, #8e8e8e, #3c3c3c 45%, #2b2b2b);
    border-color: #8d8d8d;
  }

  .focus {
    background: linear-gradient(160deg, #d9d9d9, #8e8e8e 45%, #a9a9a9);
    border-color: #dcdcdc;
  }

  .atc {
    fill: #2860bd;
    font-family: "Liberation Sans", sans-serif;
    font-size: 6px;
    font-weight: 700;
    text-anchor: middle;
  }

  .tray {
    align-items: center;
    color: #fff;
    display: flex;
    font-size: 10px;
    gap: 8px;
    margin-left: auto;
  }

  .lang {
    align-self: flex-start;
    line-height: 30px;
    margin-right: 10px;
  }

  time {
    display: grid;
    line-height: 16px;
    margin-left: 8px;
    text-align: center;
  }

  .show-desktop {
    background: linear-gradient(160deg, #555, #151515 50%);
    border: 1px solid #666;
    height: 36px;
    margin-left: 11px;
    width: 13px;
  }
</style>
